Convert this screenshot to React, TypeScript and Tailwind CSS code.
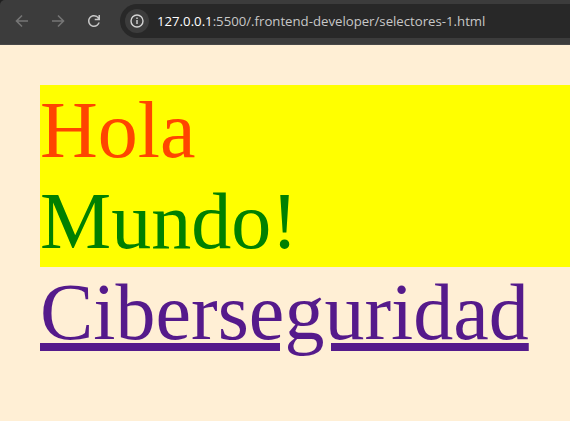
export default function App() {
  return (
    <div className="h-[421px] w-[570px] overflow-hidden bg-[#ffefd5]">
      <div className="bg-[#202020]">
      <header className="flex h-[45px] items-center rounded-tl-[5px] border-b border-[#484848] bg-[#3c3c3c] pb-[2px]">
        <div className="flex w-[120px] shrink-0 items-center gap-5 pl-[14px]">
          <svg width="16" height="16" viewBox="0 0 16 16" fill="none" stroke="#757575" strokeWidth="1.6"><path d="M14 8H3M8 2.5L2.5 8L8 13.5" /></svg>
          <svg width="16" height="16" viewBox="0 0 16 16" fill="none" stroke="#757575" strokeWidth="1.6"><path d="M2 8H13M8 2.5L13.5 8L8 13.5" /></svg>
          <svg width="16" height="16" viewBox="0 0 16 16"><path fill="#c7c7c7" d="M8 14C6.3 14 4.9 13.4 3.75 12.25S2 9.7 2 8S2.6 4.9 3.75 3.75S6.3 2 8 2C8.9 2 9.7 2.2 10.5 2.55S11.9 3.4 12.5 4.1V2H14V7.25H8.75V5.75H11.9C11.5 5.05 11 4.5 10.3 4.1S8.8 3.5 8 3.5C6.75 3.5 5.7 3.94 4.8 4.8S3.5 6.75 3.5 8S3.94 10.3 4.8 11.2S6.75 12.5 8 12.5C8.95 12.5 9.8 12.2 10.6 11.7S11.9 10.4 12.25 9.5H13.8C13.45 10.8 12.7 11.9 11.65 12.75S9.35 14 8 14Z" /></svg>
        </div>
        <div className="flex h-[34px] flex-1 items-center rounded-l-full bg-[#282828] pl-[5px]">
          <div className="flex size-6 items-center justify-center rounded-full bg-[#3c3c3c]">
            <svg width="16" height="16" viewBox="0 0 16 16" fill="none" stroke="#d4d4d4" strokeWidth="1.4"><circle cx="8" cy="8" r="6" /><path d="M8 7v4M8 4.6V6" /></svg>
          </div>
          <span className="ml-2 whitespace-nowrap pt-[2px] font-['Open_Sans',sans-serif] text-[13.2px] text-[#c7c7c7]"><span className="text-white">127.0.0.1</span>:5500/.frontend-developer/selectores-1.html</span>
        </div>
      </header>
      </div>
      <main className="pl-10 pt-10 font-['Liberation_Serif',serif] text-[80px] leading-[91px]">
        <div className="bg-[#ffff00]"><p className="text-[#ff4500]">Hola</p><p className="text-[#008000]">Mundo!</p></div>
        <a className="text-[#551a8b] underline">Ciberseguridad</a>
      </main>
    </div>
  );
}
